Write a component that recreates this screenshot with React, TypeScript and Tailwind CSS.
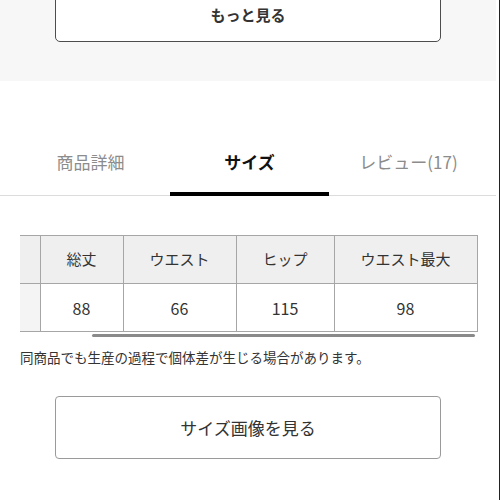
import React from 'react';

const tabs = ['商品詳細', 'サイズ', 'レビュー(17)'];
const headers = ['総丈', 'ウエスト', 'ヒップ', 'ウエスト最大'];
const values = ['88', '66', '115', '98'];

const App: React.FC = () => {
  return (
    <div className="flex h-[500px] w-[500px] overflow-hidden bg-white font-['Noto_Sans_CJK_JP','Noto_Sans',sans-serif] text-[#333]">
      <main className="flex w-[496px] flex-col">
        {/* previous section */}
        <section className="h-[81px] bg-[#f7f7f7] px-[55px]">
          <button className="-mt-[12px] flex h-[54px] w-full items-center justify-center rounded-[5px] border-[1.5px] border-[#4d4d4d] bg-white text-[15px] font-bold text-[#333]">
            もっと見る
          </button>
        </section>

        {/* tabs */}
        <nav className="mt-[52px] flex border-b border-[#dcdcdc] pl-[11px] pr-[8px]">
          {tabs.map((t, i) => (
            <div
              key={t}
              className={
                i === 1
                  ? '-mb-px flex h-[63px] flex-1 items-center justify-center border-b-4 border-black pb-[2px] text-[17px] font-bold text-[#111]'
                  : '-mb-px flex h-[63px] flex-1 items-center justify-center border-b-4 border-transparent pb-[2px] text-[17px] text-[#8c8c8c]'
              }
            >
              {t}
            </div>
          ))}
        </nav>

        {/* size table */}
        <div className="mt-[39px] pl-[20px]">
          <table className="w-[457px] table-fixed border-collapse text-[15px]">
            <colgroup>
              <col className="w-[20px]" />
              <col className="w-[83px]" />
              <col className="w-[113px]" />
              <col className="w-[98px]" />
              <col className="w-[143px]" />
            </colgroup>
            <tbody>
              <tr className="h-[48px] bg-[#efefef]">
                <td className="border border-l-0 border-[#a6a6a6]" />
                {headers.map((h) => (
                  <td key={h} className="border border-[#a6a6a6] text-center">
                    {h}
                  </td>
                ))}
              </tr>
              <tr className="h-[48px] text-[16px]">
                <td className="border border-l-0 border-[#a6a6a6] bg-[#f4f4f4]" />
                {values.map((v) => (
                  <td key={v} className="border border-[#a6a6a6] bg-white text-center">
                    {v}
                  </td>
                ))}
              </tr>
            </tbody>
          </table>
          <div className="ml-[72px] mt-[2px] h-[3px] w-[383px] rounded-full bg-[#8a8a8a]" />
        </div>

        <p className="mt-[10px] pl-[20px] text-[13.5px] leading-[20px] text-[#333]">
          同商品でも生産の過程で個体差が生じる場合があります。
        </p>

        <div className="mt-[29px] px-[55px]">
          <button className="flex h-[63px] w-full items-center justify-center rounded-[4px] border border-[#9a9a9a] bg-white text-[17px] text-[#333]">
            サイズ画像を見る
          </button>
        </div>
      </main>
      <div className="w-[3px] bg-white" />
      <div className="w-px bg-[#222]" />
    </div>
  );
};

export default App;
